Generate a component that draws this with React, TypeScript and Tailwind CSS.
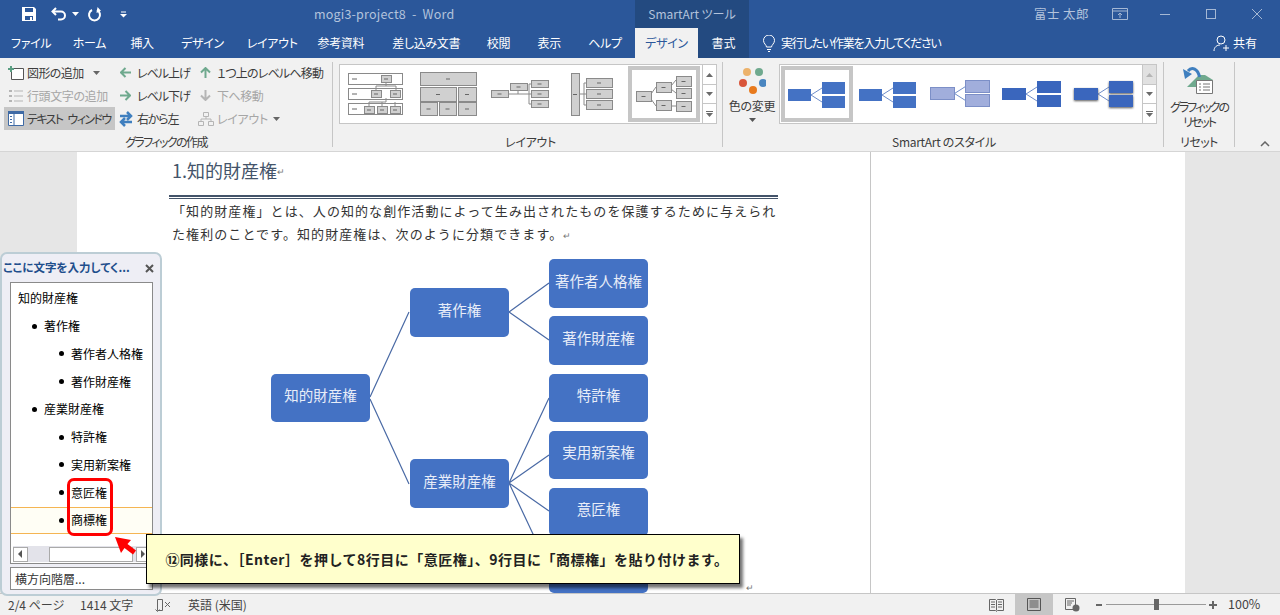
const sans = '"Noto Sans CJK JP", "Noto Sans", sans-serif';

function Caret({ className = "" }: { className?: string }) {
  return (
    <svg width="7" height="4" viewBox="0 0 7 4" className={className}>
      <path d="M0 0h7L3.5 4z" fill="currentColor" />
    </svg>
  );
}

function TitleBar() {
  return (
    <div className="flex h-7 shrink-0 items-center bg-[#2b579a] text-[12.5px] text-[#b3c3dc]">
      {/* quick access */}
      <svg width="16" height="16" viewBox="0 0 16 16" className="ml-[21px]">
        <path d="M1 1h12l2 2v12H1z" fill="#fff" />
        <path d="M4 2h8v4H4z" fill="#2b579a" />
        <path d="M4 10h8v4H4z" fill="#2b579a" />
        <path d="M9 11h2v3H9z" fill="#fff" />
      </svg>
      <svg width="18" height="14" viewBox="0 0 18 14" className="ml-[14px]">
        <path d="M5 1 1.5 4.5 5 8" fill="none" stroke="#fff" strokeWidth="2" />
        <path d="M2 4.5h8a4 4 0 0 1 0 8H7" fill="none" stroke="#fff" strokeWidth="2" />
      </svg>
      <Caret className="ml-[3px] text-white" />
      <svg width="15" height="15" viewBox="0 0 15 15" className="ml-[8px]">
        <path d="M5 3a5.5 5.5 0 1 0 5 0" fill="none" stroke="#fff" strokeWidth="2" />
        <path d="M10 0v6l4-3z" fill="#fff" transform="rotate(10 10 3)" />
      </svg>
      <svg width="7" height="7" viewBox="0 0 7 7" className="ml-[18px] text-white">
        <path d="M1 1h5" stroke="currentColor" />
        <path d="M0 3h7L3.5 6.5z" fill="currentColor" />
      </svg>
      <span className="ml-[187px] w-[321px] tracking-[0.2px]">mogi3-project8&nbsp; -&nbsp; Word</span>
      <div className="flex h-7 w-[114px] items-center justify-center bg-[#234a80] text-[12px]">SmartArt ツール</div>
      <span className="ml-[285px] w-[78px] tracking-[0.4px]">富士 太郎</span>
      <svg width="16" height="12" viewBox="0 0 16 12" fill="none" stroke="#a5b8d4">
        <path d="M.5.5h15v11H.5zM.5 3h15M8 10V5M6 7l2-2 2 2" />
      </svg>
      <div className="ml-[32px] h-px w-[10px] bg-[#a5b8d4]" />
      <div className="ml-[36px] h-[10px] w-[10px] border border-[#a5b8d4]" />
      <svg width="10" height="10" viewBox="0 0 10 10" className="ml-[36px]" stroke="#a5b8d4">
        <path d="M0 0l10 10M10 0 0 10" />
      </svg>
    </div>
  );
}

function TabRow() {
  return (
    <div className="flex h-[30px] shrink-0 items-center whitespace-nowrap bg-[#2b579a] pl-[11px] text-[12px] text-white">
      <div className="flex w-[624px] gap-[26.700px] tracking-[-0.3px]">
        <span className="w-[35px]">ファイル</span>
        <span className="w-[31px]">ホーム</span>
        <span className="w-[24px]">挿入</span>
        <span className="w-[39px]">デザイン</span>
        <span className="w-[44px]">レイアウト</span>
        <span className="w-[48px]">参考資料</span>
        <span className="w-[68px]">差し込み文書</span>
        <span className="w-[24px]">校閲</span>
        <span className="w-[24px]">表示</span>
        <span className="w-[31px]">ヘルプ</span>
      </div>
      <div className="flex h-full w-[63px] items-center justify-center bg-[#f1f1f1] tracking-[-0.3px] text-[#2b579a]">デザイン</div>
      <div className="flex h-full w-[51px] items-center justify-center bg-[#234a80]">書式</div>
      <svg width="14" height="17" viewBox="0 0 14 17" fill="none" stroke="#fff" className="ml-[13px]">
        <path d="M4.5 12c0-2-3-3.500-3-6.500a5.500 5.500 0 0 1 11 0c0 3-3 4.500-3 6.500zM5 14.500h4M6 16.500h2" />
      </svg>
      <span className="ml-[5px] w-[432px] tracking-[-1.200px]">実行したい作業を入力してください</span>
      <svg width="17" height="17" viewBox="0 0 17 17" fill="none" stroke="#fff">
        <circle cx="8" cy="5" r="4" />
        <path d="M1 16c0-4 3-6 6-6M10 13h6M13 10v6" />
      </svg>
      <span className="ml-[3px]">共有</span>
    </div>
  );
}

function RibbonItem({ icon, label, disabled, active, caret, labelClass = "" }: { icon: React.ReactNode; label: string; disabled?: boolean; active?: boolean; caret?: string; labelClass?: string }) {
  return (
    <div className={`flex h-[23px] items-center ${disabled ? "text-[#a6a6a6]" : "text-[#3c3c3c]"} ${active ? "bg-[#c6c6c6]" : ""}`}>
      <span className="flex w-[23px] shrink-0 justify-center">{icon}</span>
      <span className={`whitespace-nowrap ${labelClass}`}>{label}</span>
      {caret && <Caret className={`${caret} text-[#666]`} />}
    </div>
  );
}

function Arrow({ dir, color }: { dir: "left" | "right" | "up" | "down"; color: string }) {
  const rot = { left: 0, up: 90, right: 180, down: 270 }[dir];
  return (
    <svg width="11" height="11" viewBox="0 0 11 11" style={{ transform: `rotate(${rot}deg)` }}>
      <path d="M5.500 1 1 5.500 5.500 10M1.500 5.500H11" fill="none" stroke={color} strokeWidth="2" />
    </svg>
  );
}

function GroupLabel({ children, className = "" }: { children: string; className?: string }) {
  return <div className={`mb-[-3px] mt-auto h-[16px] shrink-0 whitespace-nowrap text-center leading-[16px] text-[#3c3c3c] ${className}`}>{children}</div>;
}

function GroupCreate() {
  return (
    <div className="flex h-full w-[333px] shrink-0 flex-col border-r border-[#c6c6c6] pl-[4px]">
      <div className="flex mt-[-1px]">
        <div className="w-[111px]">
          <RibbonItem
            label="図形の追加"
            labelClass="tracking-[-0.600px]"
            caret="ml-[9px]"
            icon={
              <svg width="16" height="14" viewBox="0 0 16 14">
                <path d="M3.500 2.500h12v11h-12z" fill="#fff" stroke="#555" />
                <path d="M0 3h6M3 0v6" stroke="#5a9e82" strokeWidth="2" />
              </svg>
            }
          />
          <RibbonItem
            disabled
            label="行頭文字の追加"
            labelClass="tracking-[-0.400px]"
            icon={
              <svg width="14" height="14" viewBox="0 0 14 14" fill="#b5b5b5">
                <path d="M0 1h3v2H0zM0 6h3v2H0zM0 11h3v2H0zM5 1.500h9v1H5zM5 6.500h9v1H5zM5 11.500h9v1H5z" />
              </svg>
            }
          />
          <RibbonItem
            active
            label="テキスト ウィンドウ"
            labelClass="tracking-[-1.600px] [word-spacing:4px]"
            icon={
              <svg width="16" height="15" viewBox="0 0 16 15">
                <path d="M.5.5h15v14H.5z" fill="#fff" stroke="#3f6aa5" />
                <path d="M0 0h16v3H0z" fill="#3f6aa5" />
                <path d="M6 3v11" stroke="#3f6aa5" />
                <path d="M2 5.500h2M2 8.500h2M2 11.500h2" stroke="#3f6aa5" />
              </svg>
            }
          />
        </div>
        <div className="ml-[-1px] w-[80px]">
          <RibbonItem label="レベル上げ" labelClass="tracking-[-1px]" icon={<Arrow dir="left" color="#6fa98e" />} />
          <RibbonItem label="レベル下げ" labelClass="tracking-[-1px]" icon={<Arrow dir="right" color="#6fa98e" />} />
          <RibbonItem
            label="右から左"
            labelClass="tracking-[-1.200px]"
            icon={
              <svg width="14" height="16" viewBox="0 0 14 16" fill="none" stroke="#3f7fbf" strokeWidth="2.500">
                <path d="M1 5h11M8 1l4 4-4 4" />
                <path d="M13 11H2M6 7l-4 4 4 4" />
              </svg>
            }
          />
        </div>
        <div>
          <RibbonItem label="１つ上のレベルへ移動" labelClass="tracking-[-0.800px]" icon={<Arrow dir="up" color="#6fa98e" />} />
          <RibbonItem disabled label="下へ移動" labelClass="tracking-[-0.500px]" icon={<Arrow dir="down" color="#b5b5b5" />} />
          <RibbonItem
            disabled
            caret="ml-[5px]"
            label="レイアウト"
            labelClass="tracking-[-0.300px]"
            icon={
              <svg width="16" height="14" viewBox="0 0 16 14" fill="none" stroke="#b5b5b5">
                <path d="M5.500.5h5v4h-5zM.5 9.500h5v4h-5zM10.500 9.500h5v4h-5zM8 4.500v2.500M3 9.500V7h10v2.500" />
              </svg>
            }
          />
        </div>
      </div>
      <GroupLabel className="pr-[4px] tracking-[-1.600px]">グラフィックの作成</GroupLabel>
    </div>
  );
}

function GalleryScroll({ disabledTop }: { disabledTop?: boolean }) {
  return (
    <div className="flex h-full w-[14px] flex-col border-l border-[#c6c6c6] text-[#6a6a6a]">
      <div className={`flex h-[20px] items-center justify-center border-b border-[#c6c6c6] ${disabledTop ? "bg-[#e1e1e1] text-[#b5b5b5]" : ""}`}>
        <Caret className="rotate-180" />
      </div>
      <div className="flex h-[19px] items-center justify-center border-b border-[#c6c6c6]">
        <Caret />
      </div>
      <div className="flex flex-1 flex-col items-center justify-center gap-[1px]">
        <div className="h-px w-[7px] bg-current" />
        <Caret />
      </div>
    </div>
  );
}

const thumbBox = { fill: "#d0d0d0", stroke: "#8a8a8a" };

function Box({ x, y, w, h }: { x: number; y: number; w: number; h: number }) {
  return (
    <g>
      <rect x={x + 0.5} y={y + 0.5} width={w} height={h} {...thumbBox} />
      <path d={`M${x + w / 2 - 2} ${y + h / 2 + 0.5}h4`} stroke="#666" />
    </g>
  );
}

function LayoutGallery() {
  return (
    <div className="flex h-full w-[390px] shrink-0 flex-col border-r border-[#c6c6c6] pl-[6px]">
      <div className="mt-[2px] flex h-[60px] w-[378px] items-center border border-[#c6c6c6] bg-white">
        <svg width="72" height="56" viewBox="340 66 72 56">
          <g fill="#fff" stroke="#8a8a8a">
            <rect x="348.500" y="73.500" width="54" height="11" />
            <rect x="348.500" y="88.500" width="54" height="11" />
            <rect x="348.500" y="103.500" width="54" height="11" />
          </g>
          <path d="M352 79h5M352 94h5M352 109h5" stroke="#666" />
          <path d="M386 82v4h-10v4M386 86h10v4M386 98v4h-17v4M382 102v4M395 102v4" stroke="#8a8a8a" fill="none" />
          <Box x={381} y={75} w={10} h={7} />
          <Box x={371} y={90} w={10} h={7} />
          <Box x={390} y={90} w={10} h={7} />
          <Box x={364} y={106} w={10} h={7} />
          <Box x={377} y={106} w={10} h={7} />
          <Box x={390} y={106} w={10} h={7} />
        </svg>
        <svg width="72" height="56" viewBox="412 66 72 56">
          <Box x={420} y={72} w={56} h={13} />
          <Box x={420} y={87} w={36} h={14} />
          <Box x={458} y={87} w={18} h={14} />
          <Box x={420} y={102} w={17} h={13} />
          <Box x={439} y={102} w={17} h={13} />
          <Box x={458} y={102} w={18} h={13} />
        </svg>
        <svg width="72" height="56" viewBox="484 66 72 56">
          <path d="M508 94h21M518 90v4M529 84v20M529 84h2M529 94h2M529 104h2" stroke="#8a8a8a" fill="none" />
          <Box x={491} y={90} w={17} h={7} />
          <Box x={510} y={83} w={17} h={7} />
          <Box x={531} y={80} w={17} h={7} />
          <Box x={531} y={90} w={17} h={7} />
          <Box x={531} y={100} w={17} h={7} />
        </svg>
        <svg width="72" height="56" viewBox="556 66 72 56">
          <path d="M579 94h5M584 83v22M584 83h2M584 94h2M584 105h2" stroke="#8a8a8a" fill="none" />
          <Box x={571} y={73} w={8} h={42} />
          <Box x={586} y={78} w={26} h={9} />
          <Box x={586} y={89} w={26} h={9} />
          <Box x={586} y={100} w={26} h={9} />
        </svg>
        <div className="h-[56px] w-[72px] border-[4px] border-[#c6c6c6]">
          <svg width="64" height="48" viewBox="632 70 64 48" className="block">
            <path d="M651 94l5-7M651 99l5 7M671 86l5-6M671 89l5 4M671 106h5" stroke="#8a8a8a" fill="none" />
            <Box x={636} y={91} w={15} h={10} />
            <Box x={656} y={82} w={15} h={10} />
            <Box x={656} y={100} w={15} h={10} />
            <Box x={676} y={76} w={15} h={10} />
            <Box x={676} y={88} w={15} h={10} />
            <Box x={676} y={101} w={15} h={10} />
          </svg>
        </div>
        <div className="ml-auto h-full">
          <GalleryScroll />
        </div>
      </div>
      <GroupLabel className="tracking-[-0.300px]">レイアウト</GroupLabel>
    </div>
  );
}

function StyleThumb({ x, y1, w, fill, stroke, shadow }: { x: number; y1: number; w: number; fill: string; stroke?: string; shadow?: boolean }) {
  const rx = x + w + 11;
  const f = shadow ? { filter: "drop-shadow(0 1px 1px #555)" } : undefined;
  return (
    <g>
      <path d={`M${x + w} ${y1 + 6}l11 -7M${x + w} ${y1 + 6}l11 7`} stroke="#6f8dc9" fill="none" />
      <rect x={x} y={y1} width={w} height={12} fill={fill} stroke={stroke} style={f} />
      <rect x={rx} y={y1 - 7} width={w} height={12} fill={fill} stroke={stroke} style={f} />
      <rect x={rx} y={y1 + 7} width={w} height={12} fill={fill} stroke={stroke} style={f} />
    </g>
  );
}

function StyleGallery() {
  return (
    <div className="flex h-full w-[441px] shrink-0 flex-col border-r border-[#c6c6c6]">
      <div className="flex">
        <div className="flex w-[56px] flex-col items-center pl-[2px]">
          <svg width="28" height="32" viewBox="0 0 28 32" className="mt-[5px] shrink-0">
            <circle cx="9" cy="5" r="4" fill="#ecb26b" />
            <circle cx="21" cy="5" r="4" fill="#6fa98e" />
            <circle cx="5" cy="16" r="4" fill="#d9553a" />
            <circle cx="25" cy="16" r="4" fill="#4a86c0" />
            <circle cx="15" cy="23" r="4" fill="#e87a1d" />
          </svg>
          <span className="mt-[-2px] whitespace-nowrap leading-[18px] tracking-[-0.300px] text-[#3c3c3c]">色の変更</span>
          <Caret className="mt-[3px] text-[#555]" />
        </div>
        <div className="mt-[2px] flex h-[60px] w-[378px] items-center border border-[#c6c6c6] bg-white">
          <div className="ml-[1px] h-[56px] w-[72px] shrink-0 border-[4px] border-[#c6c6c6]">
            <svg width="64" height="48" viewBox="785 70 64 48" className="block">
              <StyleThumb x={788} y1={89} w={23} fill="#4472c4" />
            </svg>
          </div>
          <svg width="288" height="56" viewBox="854 66 288 56" className="shrink-0">
            <StyleThumb x={860} y1={89} w={23} fill="#4472c4" />
            <StyleThumb x={931.500} y1={87.500} w={24} fill="#a1aedc" stroke="#7c8fc7" />
            <StyleThumb x={1003} y1={88} w={24} fill="#3a66bd" />
            <StyleThumb x={1075} y1={88} w={24} fill="#3a66bd" shadow />
          </svg>
          <div className="ml-auto h-full">
            <GalleryScroll disabledTop />
          </div>
        </div>
      </div>
      <GroupLabel className="pl-[2px] tracking-[-0.300px]">SmartArt のスタイル</GroupLabel>
    </div>
  );
}

function ResetGroup() {
  return (
    <div className="flex h-full w-[71px] shrink-0 flex-col items-center border-r border-[#c6c6c6]">
      <svg width="32" height="30" viewBox="0 0 32 30" className="mt-[3px] shrink-0">
        <path d="M4 22 16 10h6l8 5v7z" fill="#6fa98e" />
        <path d="M16.500 12C15 4 9 1 5 6" fill="none" stroke="#3f7fbf" strokeWidth="3" />
        <path d="M0 4l9 5-7 5z" fill="#3f7fbf" />
        <path d="M13.500 15.500h16v13h-16z" fill="#fff" stroke="#777" />
        <path d="M16 19h2M20 19h7M16 22h2M20 22h7M16 25h2M20 25h7" stroke="#777" />
      </svg>
      <div className="mt-[4px] whitespace-nowrap text-center leading-[15px] tracking-[-2px] text-[#3c3c3c]">
        グラフィックの
        <br />
        リセット
      </div>
      <GroupLabel className="tracking-[-0.600px]">リセット</GroupLabel>
    </div>
  );
}

function Ribbon() {
  return (
    <div className="relative flex h-[94px] shrink-0 border-b border-[#d5d5d5] bg-[#f1f1f1] pb-[4px] pt-[4px] text-[12px]">
      <GroupCreate />
      <LayoutGallery />
      <StyleGallery />
      <ResetGroup />
      <svg width="10" height="6" viewBox="0 0 10 6" className="absolute left-[1260px] top-[83px]" fill="none" stroke="#666" strokeWidth="1.500">
        <path d="M1 5l4-4 4 4" />
      </svg>
    </div>
  );
}

function Node({ className, children }: { className: string; children: string }) {
  return <div className={`absolute flex w-[99px] items-center justify-center rounded-[5px] bg-[#4472c4] pb-[6px] text-[14.500px] text-[#e8edf8] ${className}`}>{children}</div>;
}

function Diagram() {
  return (
    <div className="relative h-[344px] w-[500px]">
      <svg width="500" height="344" viewBox="172 250 500 344" className="absolute left-0 top-0" fill="none" stroke="#4a6aa5" strokeWidth="1.200">
        <path d="M370 397l39-85M370 399l39 85" />
        <path d="M509 312l40-29M509 312l40 28" />
        <path d="M509 483l40-85M509 483l40-28M509 483l40 28M509 483l40 85" />
      </svg>
      <Node className="left-[99px] top-[124px] h-[48px]">知的財産権</Node>
      <Node className="left-[238px] top-[38px] h-[49px]">著作権</Node>
      <Node className="left-[238px] top-[209px] h-[49px]">産業財産権</Node>
      <Node className="left-[377px] top-[9px] h-[49px]">著作者人格権</Node>
      <Node className="left-[377px] top-[66px] h-[49px]">著作財産権</Node>
      <Node className="left-[377px] top-[124px] h-[48px]">特許権</Node>
      <Node className="left-[377px] top-[181px] h-[48px]">実用新案権</Node>
      <Node className="left-[377px] top-[238px] h-[48px]">意匠権</Node>
      <Node className="left-[377px] top-[295px] h-[48px]">商標権</Node>
      <span className="absolute left-[574px] top-[333px] h-[9px] text-[9px] leading-[9px] text-[#777]">↵</span>
    </div>
  );
}

function Document() {
  return (
    <div className="flex min-h-0 flex-1 overflow-hidden bg-[#e6e6e6]">
      <div className="ml-[77px] h-full w-[794px] border-r border-[#c6c6c6] bg-white pl-[95px]">
        <div className="flex h-[43px] items-center pb-[7px] text-[18px] text-[#44546a]">
          1.知的財産権
          <span className="mt-[3px] text-[9px] text-[#777]">↵</span>
        </div>
        <div className="ml-[-3px] h-[4px] w-[609px] border-b border-t-2 border-[#44546a]" />
        <p className="mb-[5px] w-[620px] text-[13px] leading-[23px] tracking-[1.080px] text-[#333]">
          「知的財産権」とは、人の知的な創作活動によって生み出されたものを保護するために与えられ
          <br />
          た権利のことです。知的財産権は、次のように分類できます。
          <span className="text-[9px] leading-none text-[#777]">↵</span>
        </p>
        <Diagram />
      </div>
      <div className="h-full w-[314px] bg-white" />
    </div>
  );
}

function ListRow({ level, text, hi }: { level: number; text: string; hi?: boolean }) {
  const pad = level === 0 ? "pl-[7px]" : level === 1 ? "pl-[21px]" : "pl-[48px]";
  return (
    <div className={`flex h-[27.750px] items-center text-[12px] text-black ${pad} ${hi ? "border-y border-[#f5b553] bg-[#fffef5]" : ""}`}>
      {level > 0 && <span className="mr-[7px] h-[5px] w-[5px] rounded-full bg-black" />}
      {text}
    </div>
  );
}

function TextPane() {
  return (
    <div className="absolute left-0 top-[252px] flex h-[344px] w-[162px] flex-col rounded-[7px] border-2 border-[#bccdd5] bg-[#eeeef5]">
      <div className="flex h-[28px] shrink-0 items-center justify-between pl-[1px] pr-[6px] text-[11.500px] font-bold text-[#1f4e8c]">
        <span>ここに文字を入力してく...</span>
        <svg width="9" height="9" viewBox="0 0 9 9" stroke="#555" strokeWidth="2">
          <path d="M1 1l7 7M8 1 1 8" />
        </svg>
      </div>
      <div className="ml-[8px] flex h-[282px] w-[143px] shrink-0 flex-col border border-[#8a8a8a] bg-white">
        <div className="pt-[1.500px]">
          <ListRow level={0} text="知的財産権" />
          <ListRow level={1} text="著作権" />
          <ListRow level={2} text="著作者人格権" />
          <ListRow level={2} text="著作財産権" />
          <ListRow level={1} text="産業財産権" />
          <ListRow level={2} text="特許権" />
          <ListRow level={2} text="実用新案権" />
          <ListRow level={2} text="意匠権" />
          <ListRow level={2} text="商標権" hi />
        </div>
        <div className="mx-[2px] mb-[1px] mt-auto flex h-[16px] items-center bg-[#e3e3ea]">
          <div className="flex h-[15px] w-[15px] items-center justify-center border border-[#aaa] bg-white">
            <span className="h-0 w-0 border-y-[4px] border-r-[4px] border-y-transparent border-r-[#555]" />
          </div>
          <div className="ml-[21px] h-[15px] w-[86px] border border-[#aaa] bg-white" />
          <div className="ml-[3px] flex h-[15px] w-[14px] items-center justify-center border border-[#aaa] bg-white">
            <span className="h-0 w-0 border-y-[4px] border-l-[4px] border-y-transparent border-l-[#555]" />
          </div>
        </div>
      </div>
      <div className="ml-[8px] mt-[3px] flex h-[23px] w-[143px] items-center border border-[#8a8a8a] bg-white pl-[4px] text-[12px] text-[#333]">横方向階層...</div>
    </div>
  );
}

function Callout() {
  return (
    <div className="absolute left-[146px] top-[534px] flex h-[50px] w-[594px] items-center justify-center whitespace-nowrap border border-black bg-[#ffffcc] pl-[8px] text-[14px] font-bold tracking-[0.500px] text-[#222] shadow-[3px_4px_3px_rgba(0,0,0,0.55)] [font-feature-settings:normal]">
      ⑫同様に、［Enter］を押して8行目に「意匠権」、9行目に「商標権」を貼り付けます。
    </div>
  );
}

function Annotation() {
  return (
    <>
      <div className="absolute left-[67px] top-[478px] h-[58px] w-[46px] rounded-[7px] border-[3px] border-[#ff0000]" />
      <svg width="24" height="22" viewBox="0 0 24 22" className="absolute left-[114px] top-[536px]">
        <path d="M1 1 17 4 13.500 8 22 14.500 19 18.500 10.500 12 7 17z" fill="#ff0000" />
      </svg>
    </>
  );
}

function StatusBar() {
  return (
    <div className="flex h-[22px] shrink-0 items-center border-t border-[#c6c6c6] bg-[#f1f1f1] pl-[8px] text-[12px] text-[#444]">
      <span className="w-[72px]">2/4 ページ</span>
      <span className="w-[75px]">1414 文字</span>
      <svg width="16" height="14" viewBox="0 0 16 14" fill="none" stroke="#666">
        <path d="M2.500 1.500h5v11h-5zM.5 11.500l2 2 2-2M10 4l5 5M15 4l-5 5" />
      </svg>
      <span className="ml-[17px] w-[801px]">英語 (米国)</span>
      <svg width="15" height="14" viewBox="0 0 15 14" fill="none" stroke="#666">
        <path d="M.5 1.500h6l1 1 1-1h6v11h-6l-1 1-1-1h-6zM7.500 2.500v10M2 4h4M2 6.500h4M2 9h4M9 4h4M9 6.500h4M9 9h4" />
      </svg>
      <div className="ml-[11px] flex h-full w-[38px] items-center justify-center bg-[#c6c6c6]">
        <svg width="14" height="13" viewBox="0 0 14 13" fill="none" stroke="#555">
          <path d="M.5.5h13v12H.5zM2.500 3h9M2.500 5h9M2.500 7h9M2.500 9h9" />
        </svg>
      </div>
      <svg width="15" height="14" viewBox="0 0 15 14" className="ml-[12px]">
        <path d="M.5.5h10v11H.5z" fill="none" stroke="#666" />
        <path d="M2 3h7M2 5h5M2 7h4" stroke="#666" />
        <circle cx="11" cy="10" r="3.500" fill="#666" />
      </svg>
      <div className="ml-[16px] h-[2px] w-[6px] bg-[#666]" />
      <div className="relative ml-[4px] h-px w-[100px] bg-[#9a9a9a]">
        <div className="absolute left-[48px] top-[-5px] h-[11px] w-[5px] bg-[#666]" />
      </div>
      <svg width="8" height="8" viewBox="0 0 8 8" stroke="#666" strokeWidth="2" className="ml-[3px]">
        <path d="M0 4h8M4 0v8" />
      </svg>
      <span className="ml-[11px] text-[12.500px]">100%</span>
    </div>
  );
}

export default function App() {
  return (
    <div
      className="relative flex h-[615px] w-[1280px] flex-col overflow-hidden [font-feature-settings:'palt']"
      style={{ fontFamily: sans }}
    >
      <TitleBar />
      <TabRow />
      <Ribbon />
      <div className="flex min-h-0 flex-1 [font-feature-settings:normal]">
        <Document />
      </div>
      <StatusBar />
      <TextPane />
      <Annotation />
      <Callout />
    </div>
  );
}
